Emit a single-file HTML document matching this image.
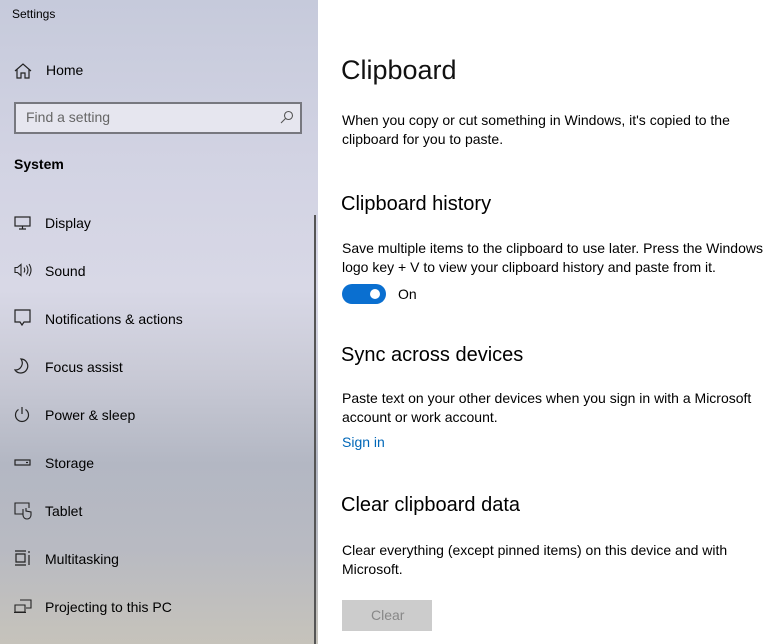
<!DOCTYPE html>
<html><head><style>
*{margin:0;padding:0;box-sizing:border-box}
body{width:784px;height:644px;overflow:hidden;font-family:"Segoe UI","Liberation Sans",sans-serif;background:#fff;position:relative;color:#000}
.side{position:absolute;left:0;top:0;width:318px;height:644px;background:linear-gradient(180deg,#c6cadb 0%,#d2d3e3 25%,#d8d8e6 45%,#c9cad6 58%,#b3b7c3 72%,#b8bac2 85%,#c6c3bb 100%)}
.t{position:absolute;font-size:14px;white-space:nowrap}
.ico{position:absolute;left:14px}
.main .t{font-size:14px}
.h1{font-size:27px!important;font-weight:300;color:#111}
.h2{font-size:20px!important}
</style></head><body>
<div class="side">
<div class="t" style="left:12px;top:7px;font-size:12px">Settings</div>
<svg class="ico" style="top:63px" width="18" height="16" viewBox="0 0 18 16" fill="none" stroke="#222" stroke-width="1.2"><path d="M1 8L9 1l8 7M3 6v9h4v-5h4v5h4V6"/></svg>
<div class="t" style="left:46px;top:62px">Home</div>
<div style="position:absolute;left:14px;top:102px;width:288px;height:32px;border:2px solid #77787f;background:#e6e6ef"></div>
<div class="t" style="left:26px;top:109px;color:#666">Find a setting</div>
<svg style="position:absolute;left:280px;top:110px" width="14" height="14" viewBox="0 0 14 14" fill="none" stroke="#555" stroke-width="1.1"><circle cx="8.5" cy="5.5" r="4"/><path d="M5.5 8.5L1 13"/></svg>
<div class="t" style="left:14px;top:156px;font-weight:bold">System</div>
<div style="position:absolute;left:314px;top:215px;width:2px;height:429px;background:#555"></div>
<svg class="ico" style="top:216px" width="18" height="14" viewBox="0 0 18 14" fill="none" stroke="#222" stroke-width="1.2"><rect x="1" y="1" width="15" height="9"/><path d="M8.5 10v3M5 13h7"/></svg>
<div class="t" style="left:45px;top:215px">Display</div>
<svg class="ico" style="top:263px" width="18" height="14" viewBox="0 0 18 14" fill="none" stroke="#222" stroke-width="1.1"><path d="M1 4.5h2.5L7 1.5v11L3.5 9.5H1z M10 4.5q1.5 2.5 0 5 M12.5 2.5q3 4.5 0 9 M15 1q4 6 0 12"/></svg>
<div class="t" style="left:45px;top:263px">Sound</div>
<svg class="ico" style="top:309px" width="18" height="18" viewBox="0 0 18 18" fill="none" stroke="#222" stroke-width="1.2"><path d="M1 1h15v12H10l-2 3-2-3H1z"/></svg>
<div class="t" style="left:45px;top:311px">Notifications &amp; actions</div>
<svg class="ico" style="top:358px" width="16" height="16" viewBox="0 0 16 16" fill="none" stroke="#222" stroke-width="1.2"><path d="M7 1a7 7 0 1 1-6 11a7 7 0 0 0 6-11z"/></svg>
<div class="t" style="left:45px;top:359px">Focus assist</div>
<svg class="ico" style="top:406px" width="16" height="17" viewBox="0 0 16 17" fill="none" stroke="#222" stroke-width="1.2"><path d="M8 1v7M4.5 3.5a6.5 6.5 0 1 0 7 0"/></svg>
<div class="t" style="left:45px;top:407px">Power &amp; sleep</div>
<svg class="ico" style="top:459px" width="18" height="8" viewBox="0 0 18 8" fill="none" stroke="#222" stroke-width="1.2"><rect x="1" y="1" width="15" height="5"/><path d="M12 3.5h2"/></svg>
<div class="t" style="left:45px;top:455px">Storage</div>
<svg class="ico" style="top:502px" width="18" height="18" viewBox="0 0 18 18" fill="none" stroke="#222" stroke-width="1.1"><path d="M9 12H1V1h14v5 M9 7v6a4 4 0 0 0 8 0v-3l-5-1V6"/></svg>
<div class="t" style="left:45px;top:503px">Tablet</div>
<svg class="ico" style="top:550px" width="18" height="16" viewBox="0 0 18 16" fill="none" stroke="#222" stroke-width="1.2"><path d="M1 1h11M1 15h11M2 4h9v8H2zM15 1v2M15 5v10"/></svg>
<div class="t" style="left:45px;top:551px">Multitasking</div>
<svg class="ico" style="top:599px" width="18" height="15" viewBox="0 0 18 15" fill="none" stroke="#222" stroke-width="1.1"><path d="M6 1h11v8h-5M1 6h10v7H1zM0 13.5h12"/></svg>
<div class="t" style="left:45px;top:599px">Projecting to this PC</div>
</div>
<div class="main">
<div class="t h1" style="left:341px;top:55px">Clipboard</div>
<div class="t" style="left:342px;top:111px;line-height:19px">When you copy or cut something in Windows, it's copied to the<br>clipboard for you to paste.</div>
<div class="t h2" style="left:341px;top:193px">Clipboard history</div>
<div class="t" style="left:342px;top:239px;line-height:19px">Save multiple items to the clipboard to use later. Press the Windows<br>logo key + V to view your clipboard history and paste from it.</div>
<div style="position:absolute;left:342px;top:284px;width:44px;height:20px;border-radius:10px;background:#0a6fd0"></div>
<div style="position:absolute;left:370px;top:289px;width:10px;height:10px;border-radius:50%;background:#fff"></div>
<div class="t" style="left:398px;top:286px">On</div>
<div class="t h2" style="left:341px;top:344px">Sync across devices</div>
<div class="t" style="left:342px;top:389px;line-height:19px">Paste text on your other devices when you sign in with a Microsoft<br>account or work account.</div>
<div class="t" style="left:342px;top:434px;color:#0067b8">Sign in</div>
<div class="t h2" style="left:341px;top:494px">Clear clipboard data</div>
<div class="t" style="left:342px;top:541px;line-height:19px">Clear everything (except pinned items) on this device and with<br>Microsoft.</div>
<div style="position:absolute;left:342px;top:600px;width:90px;height:31px;background:#ccc"></div>
<div class="t" style="left:371px;top:607px;color:#888">Clear</div>
</div>
</body></html>
